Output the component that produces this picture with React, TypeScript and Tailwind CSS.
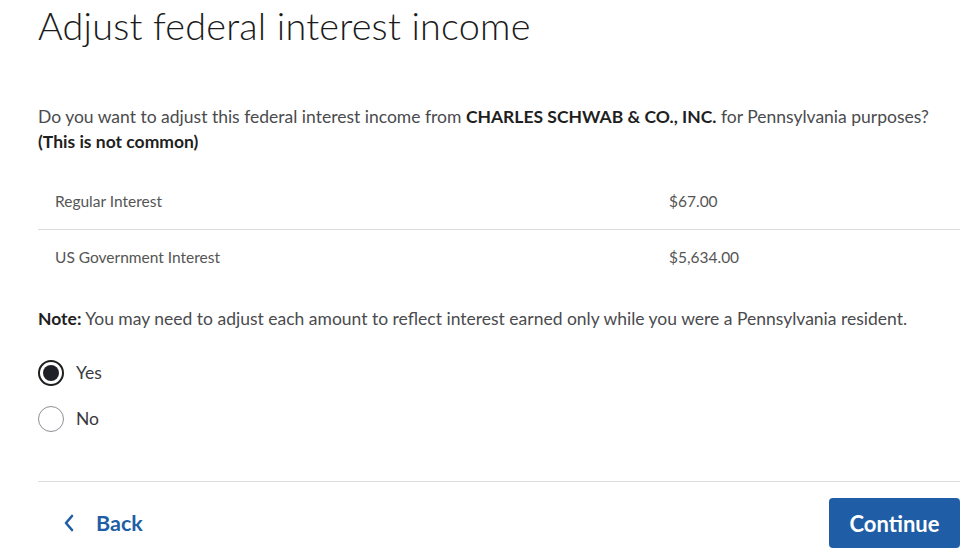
import { useState } from 'react';

const rows = [
  { label: 'Regular Interest', amount: '$67.00' },
  { label: 'US Government Interest', amount: '$5,634.00' },
];

export default function App() {

  // =========================
  // STATE
  // =========================

  const [answer, setAnswer] =
    useState<'yes' | 'no'>('yes');

  return (

    <div
      className="w-[977px] h-[555px] bg-white overflow-hidden pl-[38px] pr-[17px] text-[#393a3d]"
      style={{ fontFamily: 'Lato, "Noto Sans", sans-serif' }}
    >

      {/* TITLE */}
      <h1 className="pt-[2px] text-[37.8px] leading-[48px] font-light text-[#1b1b1b] tracking-[0.2px]">

        Adjust federal interest income

      </h1>

      {/* QUESTION */}
      <p className="mt-[54px] text-[17.5px] leading-[25px] text-[#4a4b4e]">

        Do you want to adjust this federal interest income from{' '}

        <span className="font-bold text-[#1f1f1f]">
          CHARLES SCHWAB &amp; CO., INC.
        </span>

        {' '}for Pennsylvania purposes?

        <br />

        <span className="font-bold text-[#1f1f1f]">
          (This is not common)
        </span>

      </p>

      {/* TABLE */}
      <div className="mt-[20px]">

        {rows.map((r, i) => (

          <div
            key={r.label}
            className={
              'flex items-center h-[56px] text-[15.5px] text-[#555]' +
              (i === 0 ? ' border-b border-[#dcdde0]' : '')
            }
          >

            <div className="pl-[17px] w-[631px]">
              {r.label}
            </div>

            <div>
              {r.amount}
            </div>

          </div>
        ))}

      </div>

      {/* NOTE */}
      <p className="mt-[20px] text-[17.5px] leading-[25px] text-[#4a4b4e]">

        <span className="font-bold text-[#1f1f1f]">Note:</span>{' '}
        You may need to adjust each amount to reflect interest earned only while you were a Pennsylvania resident.

      </p>

      {/* RADIOS */}
      <div className="mt-[29px] flex flex-col gap-[20px]">

        {(['yes', 'no'] as const).map((v) => (

          <label
            key={v}
            onClick={() => setAnswer(v)}
            className="flex items-center gap-[12px] cursor-pointer h-[26px]"
          >

            {answer === v ? (

              <span className="w-[26px] h-[26px] rounded-full border-2 border-[#1f1f1f] flex items-center justify-center">
                <span className="w-[16px] h-[16px] rounded-full bg-[#1f2126]" />
              </span>

            ) : (

              <span className="w-[26px] h-[26px] rounded-full border border-[#8d9096]" />
            )}

            <span className="text-[17.5px] text-[#393a3d]">
              {v === 'yes' ? 'Yes' : 'No'}
            </span>

          </label>
        ))}

      </div>

      {/* FOOTER */}
      <div className="mt-[49px] border-t border-[#dcdde0] pt-[16px] flex items-center justify-between">

        <button className="flex items-center gap-[21px] pl-[25px] text-[#1f5ea6] text-[21.5px] font-bold">

          <svg width="12" height="18" viewBox="0 0 12 18" fill="none">
            <path d="M9 2 L3 9 L9 16" stroke="#1f5ea6" strokeWidth="2.6" strokeLinecap="round" strokeLinejoin="round" />
          </svg>

          Back

        </button>

        <button className="w-[131px] h-[50px] rounded-[4px] bg-[#1f5ea6] text-white text-[22px] font-bold">

          Continue

        </button>

      </div>

    </div>
  );
}
